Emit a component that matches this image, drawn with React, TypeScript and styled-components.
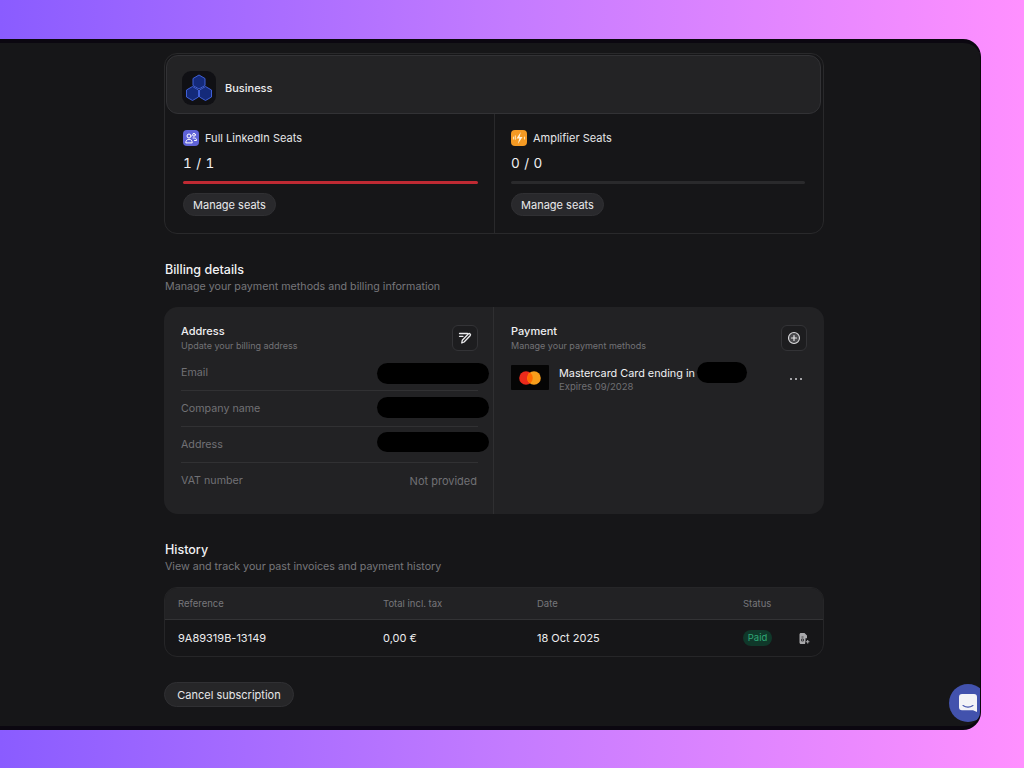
import React from "react";
import styled, { createGlobalStyle } from "styled-components";

const Global = createGlobalStyle`
  html, body { margin: 0; padding: 0; width: 1024px; height: 768px; overflow: hidden; }
  body { font-family: Inter, "Liberation Sans", sans-serif; -webkit-font-smoothing: antialiased; }
  * { box-sizing: border-box; }
`;

const Page = styled.div`
  width: 1024px; height: 768px; overflow: hidden; padding-top: 39px;
  background: linear-gradient(90deg, #8a5cff 0%, #c47bff 50%, #ff90ff 100%);
`;
const Win = styled.div`
  position: relative; width: 991px; height: 691px; margin-left: -10px;
  background: #161618; border: 4px solid #0b0710; border-right-width: 1px; border-radius: 0 18px 18px 0;
  overflow: hidden; padding: 10px 0 0 170px;
`;
const Column = styled.main`
  width: 660px; display: flex; flex-direction: column;
`;
const PlanCard = styled.section`
  height: 181px; border: 1px solid #29292b; border-radius: 13px; padding: 1px; display: flex; flex-direction: column;
`;
const PlanHead = styled.div`
  height: 59px; margin-right: 1px; flex: none; display: flex; align-items: center; gap: 9px; padding: 7px 15px 0;
  background: #232325; border: 1px solid #323235; border-radius: 12px;
  font-size: 11px; font-weight: 500; color: #ececee;
`;
const PlanLogo = styled.div`
  width: 34px; height: 34px; border-radius: 9px; background: #101014; display: flex; align-items: center; justify-content: center;
`;
const SeatGrid = styled.div`
  flex: 1; display: grid; grid-template-columns: 330px 1fr; margin: 0 -1px -1px;
`;
const SeatCell = styled.div<{ $last?: boolean }>`
  padding: 16px ${p => (p.$last ? 18 : 16)}px 0 ${p => (p.$last ? 16 : 18)}px;
  ${p => (p.$last ? "" : "border-right: 1px solid #29292b;")}
`;
const SeatTitle = styled.div`
  display: flex; align-items: center; gap: 6px; height: 16px; font-size: 11px; font-weight: 400; color: #e6e6e8;
`;
const SeatCount = styled.div`
  margin-top: 9px; height: 16px; line-height: 16px; font-size: 13.5px; letter-spacing: 0.4px;
  font-variant-numeric: tabular-nums; color: #f0f0f2;
`;
const Bar = styled.div<{ $color: string }>`
  margin-top: 10px; height: 3px; border-radius: 2px; background: ${p => p.$color};
`;
const PillButton = styled.button`
  display: block; margin-top: 9px; height: 23px; width: 93px; padding: 0; border: 1px solid #303033; border-radius: 12px;
  background: #29292c; color: #eaeaec; font: 400 11px Inter, sans-serif; white-space: nowrap;
`;
const SectionHead = styled.header`
  margin-top: 27px; padding-left: 1px; display: flex; flex-direction: column;
`;
const SectionTitle = styled.h2`
  margin: 0; height: 17px; line-height: 17px; font-size: 12.5px; font-weight: 500; color: #f2f2f4;
`;
const SectionSub = styled.p`
  margin: 1px 0 0; height: 16px; line-height: 16px; font-size: 10.7px; font-weight: 400; color: #77777b;
`;
const BillingPanel = styled.section`
  margin-top: 12px; height: 207px; border-radius: 14px; background: #222224;
  display: grid; grid-template-columns: 330px 1fr;
`;
const BillingCol = styled.div<{ $first?: boolean }>`
  position: relative; padding: 18px ${p => (p.$first ? 15 : 17)}px 0 17px;
  ${p => (p.$first ? "border-right: 1px solid #2f2f31;" : "")}
`;
const BlockHead = styled.div`
  display: flex; justify-content: space-between; align-items: flex-start; height: 30px;
`;
const BlockTitle = styled.div`
  font-size: 11px; line-height: 13px; font-weight: 500; color: #efeff1;
`;
const BlockSub = styled.div`
  margin-top: 1px; font-size: 9px; line-height: 13px; color: #727276;
`;
const IconButton = styled.div`
  width: 26px; height: 26px; border-radius: 6px; border: 1px solid #333336; background: #1d1d1f;
  display: flex; align-items: center; justify-content: center;
`;
const InfoRow = styled.div`
  position: relative; height: 36px; display: flex; justify-content: space-between; align-items: center;
  font-size: 10.7px; color: #717175; border-bottom: 1px solid #313133;
  &:last-child { border-bottom: 0; padding-bottom: 1px; }
`;
const InfoValue = styled.span`
  font-size: 11px; margin-right: 1px;
`;
const Redact = styled.span<{ $w: number; $h: number }>`
  position: absolute; width: ${p => p.$w}px; height: ${p => p.$h}px; border-radius: 11px; background: #000;
`;
const RowRedact = styled(Redact)<{ $top: number }>`
  right: -11px; top: ${p => p.$top}px;
`;
const CardRow = styled.div`
  position: relative; display: flex; align-items: center; gap: 10px; margin-top: 10px; height: 25px;
`;
const CardThumb = styled.div`
  width: 38px; height: 25px; background: #050505; border-radius: 1px; display: flex; align-items: center; justify-content: center; flex: none;
`;
const CardText = styled.div`
  padding-top: 6px;
`;
const CardName = styled.div`
  font-size: 10.85px; line-height: 13px; color: #f1f1f3; margin-top: -1px;
`;
const CardSub = styled.div`
  font-size: 9.5px; line-height: 13px; color: #6f6f73;
`;
const CardInline = styled(Redact)`
  left: 186px; top: -3px;
`;
const Dots = styled.div`
  position: absolute; right: 5px; top: 13px; display: flex; gap: 3px;
  & i { width: 2px; height: 2px; border-radius: 50%; background: #cfcfd2; display: block; }
`;
const Table = styled.section`
  margin-top: 12px; height: 70px; border: 1px solid #262628; border-radius: 13px; overflow: hidden;
`;
const Row = styled.div`
  display: grid; grid-template-columns: 205px 154px 206px 55px 1fr; padding-left: 13px; align-items: center;
`;
const HeadRow = styled(Row)`
  height: 32px; background: #222224; border-bottom: 1px solid #333335;
  font-size: 9.5px; color: #77777b;
`;
const BodyRow = styled(Row)`
  height: 36px; font-size: 11px; color: #ececee;
`;
const Paid = styled.span`
  display: inline-block; width: 29px; height: 16px; line-height: 16px; text-align: center; border-radius: 8px;
  background: #10382a; color: #2fa877; font-size: 9.5px;
`;
const CancelButton = styled.button`
  margin-top: 25px; width: 130px; height: 25px; border: 1px solid #303033; border-radius: 13px;
  background: #262628; color: #e6e6e8; font: 400 11px Inter, sans-serif; padding: 0; display: block;
`;
const Bubble = styled.div`
  position: absolute; left: 955px; top: 641px; width: 38px; height: 38px; border-radius: 50%; background: #4252ad;
  display: flex; align-items: center; justify-content: center;
`;

const HexLogo = () => (
  <svg width="30" height="30" viewBox="0 0 30 30" fill="#142a7a" stroke="#3f5fd6" strokeWidth="1" strokeLinejoin="round">
    <path d="M15 2l6 3.500v7L15 16l-6-3.500v-7z" />
    <path d="M8.500 13.500l6 3.500v7l-6 3.500-6-3.500v-7z" />
    <path d="M21.500 13.500l6 3.500v7l-6 3.500-6-3.500v-7z" />
  </svg>
);
const UsersIcon = () => (
  <svg width="16" height="16" viewBox="0 0 16 16">
    <rect width="16" height="16" rx="4" fill="#5f63d8" />
    <g fill="none" stroke="#fff" strokeWidth="1" strokeLinecap="round">
      <circle cx="6" cy="6" r="2" />
      <path d="M2.800 12.500c0-2 1.300-3.200 3.200-3.200s3.200 1.200 3.200 3.200z" />
      <circle cx="11" cy="4.800" r="1.400" />
      <path d="M10 8h1.500c1.200 0 2 .8 2 2v.5h-2" />
    </g>
  </svg>
);
const AmpIcon = () => (
  <svg width="16" height="16" viewBox="0 0 16 16">
    <rect width="16" height="16" rx="4" fill="#f59a23" />
    <path d="M9.800 2L5.500 8.500h2.800L6.800 14l4.700-7H8.600z" fill="#fff0d6" />
    <path d="M2.500 7v2M4.300 5.800v3.400M13.500 7v2" stroke="#ffe0ad" strokeWidth="1.100" strokeLinecap="round" />
  </svg>
);
const EditIcon = () => (
  <svg width="14" height="14" viewBox="0 0 14 14" fill="none" stroke="#ececee" strokeWidth="1.300" strokeLinecap="round" strokeLinejoin="round">
    <path d="M1.500 2.500h8M1.500 5.300h3.500" />
    <path d="M3.800 12l.5-2.800 6-6.200c.5-.5 1.300-.5 1.800 0s.5 1.300 0 1.800l-6 6.200z" />
  </svg>
);
const PlusIcon = () => (
  <svg width="14" height="14" viewBox="0 0 14 14">
    <circle cx="7" cy="7" r="5.500" fill="#4a4a4d" stroke="#dcdcde" strokeWidth="1.100" />
    <path d="M7 4.500v5M4.500 7h5" stroke="#e6e6e8" strokeWidth="1.200" strokeLinecap="round" />
  </svg>
);
const Mastercard = () => (
  <svg width="22" height="14" viewBox="0 0 22 14">
    <circle cx="7" cy="7" r="6.800" fill="#eb2a1b" />
    <circle cx="15" cy="7" r="6.800" fill="#f79e1b" />
    <path d="M11 1.500a6.800 6.800 0 0 1 0 11a6.800 6.800 0 0 1 0-11z" fill="#ff6a00" />
  </svg>
);
const DocIcon = () => (
  <svg width="12" height="13" viewBox="0 0 12 13" fill="none">
    <path d="M1.500 2.500c0-.8.600-1.500 1.500-1.500h3.500L9 3.500v2.800H7.500v3.200l-.5 2.500H3c-.9 0-1.500-.7-1.500-1.500z" fill="#a9a9ac" />
    <path d="M3.500 5h2M3.500 7h2v2h-2z" stroke="#2a2a2c" strokeWidth=".8" />
    <path d="M9.700 8v3.400M8 9.700h3.400" stroke="#a9a9ac" strokeWidth="1.100" />
  </svg>
);
const ChatIcon = () => (
  <svg width="18" height="18" viewBox="0 0 18 18">
    <path d="M3 0h12a3 3 0 0 1 3 3v15l-4-1.800H3a3 3 0 0 1-3-3V3a3 3 0 0 1 3-3z" fill="#f3f3f7" />
    <path d="M4 11.500c3 2 7 2 10 0" fill="none" stroke="#4252ad" strokeWidth="1.100" strokeLinecap="round" />
  </svg>
);

export default function App() {
  return (
    <>
      <Global />
      <Page>
        <Win>
          <Column>
            <PlanCard>
              <PlanHead>
                <PlanLogo><HexLogo /></PlanLogo>
                Business
              </PlanHead>
              <SeatGrid>
                <SeatCell>
                  <SeatTitle><UsersIcon />Full LinkedIn Seats</SeatTitle>
                  <SeatCount>1 / 1</SeatCount>
                  <Bar $color="#bf2a33" />
                  <PillButton>Manage seats</PillButton>
                </SeatCell>
                <SeatCell $last>
                  <SeatTitle><AmpIcon />Amplifier Seats</SeatTitle>
                  <SeatCount>0 / 0</SeatCount>
                  <Bar $color="#2a2a2c" />
                  <PillButton>Manage seats</PillButton>
                </SeatCell>
              </SeatGrid>
            </PlanCard>

            <SectionHead>
              <SectionTitle>Billing details</SectionTitle>
              <SectionSub>Manage your payment methods and billing information</SectionSub>
            </SectionHead>
            <BillingPanel>
              <BillingCol $first>
                <BlockHead>
                  <div>
                    <BlockTitle>Address</BlockTitle>
                    <BlockSub>Update your billing address</BlockSub>
                  </div>
                  <IconButton><EditIcon /></IconButton>
                </BlockHead>
                <div>
                  <InfoRow>Email<RowRedact $w={112} $h={21} $top={8} /></InfoRow>
                  <InfoRow>Company name<RowRedact $w={112} $h={21} $top={6} /></InfoRow>
                  <InfoRow>Address<RowRedact $w={112} $h={20} $top={5} /></InfoRow>
                  <InfoRow>VAT number<InfoValue>Not provided</InfoValue></InfoRow>
                </div>
              </BillingCol>
              <BillingCol>
                <BlockHead>
                  <div>
                    <BlockTitle>Payment</BlockTitle>
                    <BlockSub>Manage your payment methods</BlockSub>
                  </div>
                  <IconButton><PlusIcon /></IconButton>
                </BlockHead>
                <CardRow>
                  <CardThumb><Mastercard /></CardThumb>
                  <CardText>
                    <CardName>Mastercard Card ending in</CardName>
                    <CardSub>Expires 09/2028</CardSub>
                  </CardText>
                  <CardInline $w={50} $h={21} />
                  <Dots><i /><i /><i /></Dots>
                </CardRow>
              </BillingCol>
            </BillingPanel>

            <SectionHead>
              <SectionTitle>History</SectionTitle>
              <SectionSub>View and track your past invoices and payment history</SectionSub>
            </SectionHead>
            <Table>
              <HeadRow>
                <span>Reference</span><span>Total incl. tax</span><span>Date</span><span>Status</span><span />
              </HeadRow>
              <BodyRow>
                <span>9A89319B-13149</span><span>0,00 €</span><span>18 Oct 2025</span>
                <span><Paid>Paid</Paid></span><DocIcon />
              </BodyRow>
            </Table>
            <CancelButton>Cancel subscription</CancelButton>
          </Column>
          <Bubble><ChatIcon /></Bubble>
        </Win>
      </Page>
    </>
  );
}
